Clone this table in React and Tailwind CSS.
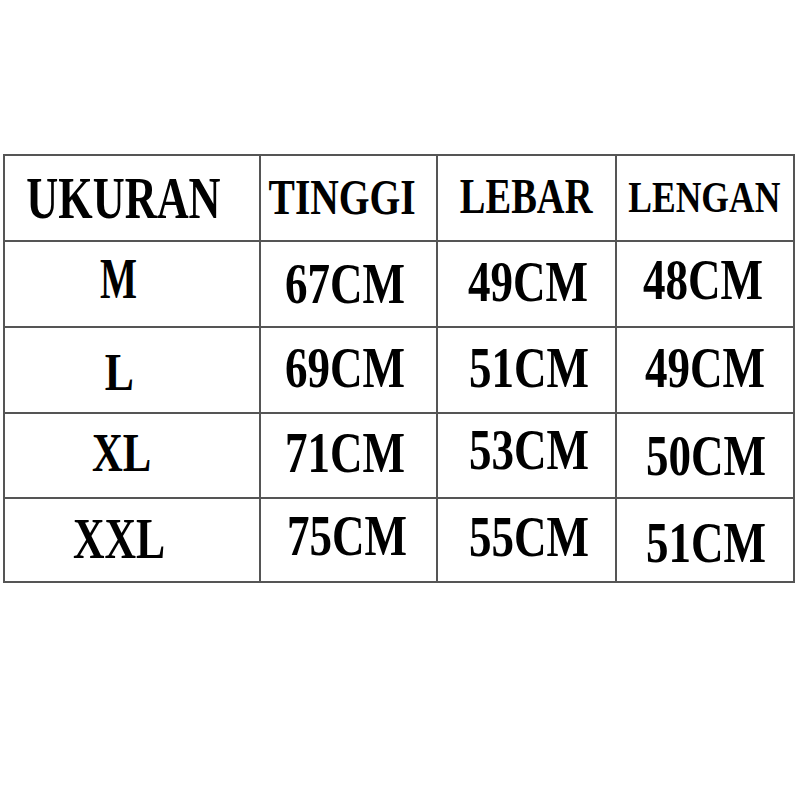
import React from "react";

// each cell: text, font size, horizontal squeeze and a small nudge to sit where the photo has it
const rows = [
  [
    { t: "UKURAN", c: "text-[59px] scale-x-[0.75] -translate-x-[9px]" },
    { t: "TINGGI", c: "text-[50px] scale-x-[0.79] -translate-x-[6px] -translate-y-[1px]" },
    { t: "LEBAR", c: "text-[50px] scale-x-[0.77] -translate-y-[2px]" },
    { t: "LENGAN", c: "text-[45px] scale-x-[0.79] -translate-x-[1px] -translate-y-[1px]" },
  ],
  [
    { t: "M", c: "text-[56px] scale-x-[0.7] -translate-x-[14px] -translate-y-[5px]" },
    { t: "67CM", c: "text-[57px] scale-x-[0.79] -translate-x-[4px] -translate-y-[1px]" },
    { t: "49CM", c: "text-[57px] scale-x-[0.79] translate-x-[1px] -translate-y-[3px]" },
    { t: "48CM", c: "text-[57px] scale-x-[0.79] -translate-x-[2px] -translate-y-[5px]" },
  ],
  [
    { t: "L", c: "text-[52px] scale-x-[0.84] -translate-x-[13px] translate-y-[3px]" },
    { t: "69CM", c: "text-[57px] scale-x-[0.79] -translate-x-[4px] -translate-y-[3px]" },
    { t: "51CM", c: "text-[57px] scale-x-[0.79] translate-x-[2px] -translate-y-[3px]" },
    { t: "49CM", c: "text-[57px] scale-x-[0.79] -translate-y-[3px]" },
  ],
  [
    { t: "XL", c: "text-[54px] scale-x-[0.79] -translate-x-[10px] -translate-y-[3px]" },
    { t: "71CM", c: "text-[57px] scale-x-[0.79] -translate-x-[4px] -translate-y-[3px]" },
    { t: "53CM", c: "text-[57px] scale-x-[0.79] translate-x-[2px] -translate-y-[6px]" },
    { t: "50CM", c: "text-[57px] scale-x-[0.79] translate-x-[1px]" },
  ],
  [
    { t: "XXL", c: "text-[56px] scale-x-[0.78] -translate-x-[13px] -translate-y-[1px]" },
    { t: "75CM", c: "text-[57px] scale-x-[0.79] -translate-x-[2px] -translate-y-[5px]" },
    { t: "55CM", c: "text-[57px] scale-x-[0.79] translate-x-[2px] -translate-y-[4px]" },
    { t: "51CM", c: "text-[57px] scale-x-[0.79] translate-x-[1px] translate-y-[2px]" },
  ],
];

export default function App() {
  return (
    <div className="w-[800px] h-[800px] bg-white pt-[154px] pl-[3px] font-['Liberation_Serif',serif]">
      <div className="w-[792px] grid grid-cols-[254px_175px_177px_176px] grid-rows-[84px_84px_84px_83px_82px] gap-[2px] p-[2px] bg-[#555555]">
        {rows.flat().map((cell, i) => (
          <div key={i} className="bg-white flex items-center justify-center overflow-hidden">
            <span className={"block leading-none font-bold text-black whitespace-nowrap " + cell.c}>
              {cell.t}
            </span>
          </div>
        ))}
      </div>
    </div>
  );
}
